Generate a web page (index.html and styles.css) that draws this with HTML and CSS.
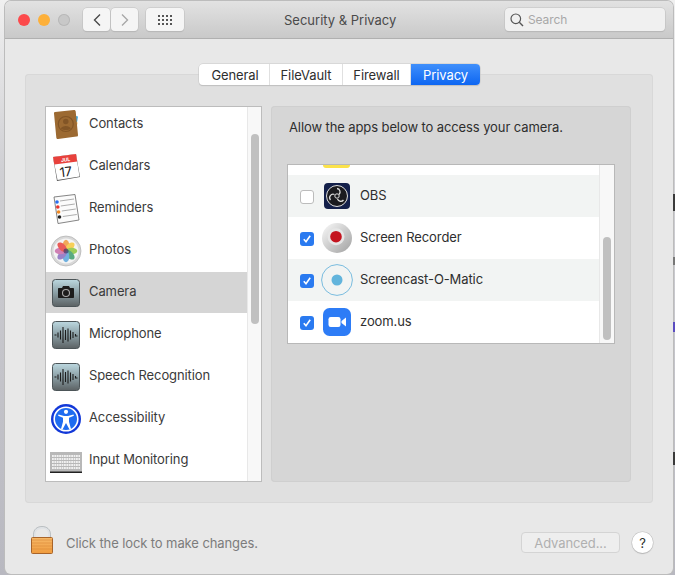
FILE: index.html
```html
<!DOCTYPE html>
<html lang="en">
<head>
    <meta charset="UTF-8">
    <meta name="viewport" content="width=device-width, initial-scale=1.0">
    <title>Security &amp; Privacy</title>
    <link rel="stylesheet" href="styles.css">
</head>
<body>
    <div class="edge-mark mark-one"></div>
    <div class="edge-mark mark-two"></div>
    <div class="edge-mark mark-three"></div>
    <div class="edge-mark mark-four"></div>
    <div class="window">
        <div class="titlebar">
            <div class="lights">
                <span class="light red"></span>
                <span class="light yellow"></span>
                <span class="light gray"></span>
            </div>
            <div class="nav-group">
                <span class="tool-btn nav-btn">
                    <svg width="10" height="14" viewBox="0 0 10 14"><path d="M8 1.500 2.500 7 8 12.500" fill="none" stroke="#4a4a4a" stroke-width="1.400"/></svg>
                </span>
                <span class="tool-btn nav-btn">
                    <svg width="10" height="14" viewBox="0 0 10 14"><path d="M2 1.500 7.500 7 2 12.500" fill="none" stroke="#a8a8a8" stroke-width="1.400"/></svg>
                </span>
            </div>
            <span class="tool-btn grid-btn">
                <svg width="14" height="10" viewBox="0 0 14 10" fill="#555">
                    <rect x="0" y="0" width="2" height="2"/><rect x="4" y="0" width="2" height="2"/><rect x="8" y="0" width="2" height="2"/><rect x="12" y="0" width="2" height="2"/>
                    <rect x="0" y="4" width="2" height="2"/><rect x="4" y="4" width="2" height="2"/><rect x="8" y="4" width="2" height="2"/><rect x="12" y="4" width="2" height="2"/>
                    <rect x="0" y="8" width="2" height="2"/><rect x="4" y="8" width="2" height="2"/><rect x="8" y="8" width="2" height="2"/><rect x="12" y="8" width="2" height="2"/>
                </svg>
            </span>
            <h1 class="title">Security &amp; Privacy</h1>
            <div class="search">
                <svg width="14" height="14" viewBox="0 0 14 14"><circle cx="5.800" cy="5.800" r="4.800" fill="none" stroke="#555" stroke-width="1.200"/><path d="M9.300 9.300 13 13" stroke="#555" stroke-width="1.400"/></svg>
                <span>Search</span>
            </div>
        </div>

        <div class="content">
            <div class="tabs">
                <span class="tab tab-general">General</span>
                <span class="tab tab-filevault">FileVault</span>
                <span class="tab tab-firewall">Firewall</span>
                <span class="tab tab-active">Privacy</span>
            </div>

            <div class="panel">
                <div class="sidebar">
                    <ul class="service-list">
                        <li class="service">
                            <svg class="service-icon" viewBox="0 0 32 32">
                                <path d="M26 7l2 .5-1 6-2-.5z" fill="#3fa9e0"/><path d="M25 13l2.500.5-1 6-2-.5z" fill="#f2a93b"/>
                                <path d="M5 3 24 1c1 0 1.500.5 1.700 1.500L28 26c0 1-.5 1.500-1.500 1.600L8 30c-1 0-1.500-.5-1.700-1.500L4 4.500C4 3.700 4.300 3 5 3z" fill="#9c6a32"/>
                                <circle cx="15.800" cy="15" r="7.500" fill="none" stroke="#825526" stroke-width="1.200"/>
                                <circle cx="15.800" cy="12.500" r="2.700" fill="#825526"/><path d="M10.800 19.500c1-3.500 9-3.500 10 0-2.500 2-7.500 2-10 0z" fill="#825526"/>
                            </svg>
                            <span class="service-name">Contacts</span>
                        </li>
                        <li class="service">
                            <svg class="service-icon" viewBox="0 0 32 32">
                                <path d="M3 6 26 3l4 23-23 4z" fill="#555"/>
                                <path d="M3 6 26 3l3.500 22.500-22 3.500z" fill="#fff"/>
                                <path d="M3 6 26 3l1.200 7.500L4.300 13.500z" fill="#e8413c"/>
                                <text x="11" y="10.500" class="cal-month" transform="rotate(-7 15 9)">JUL</text>
                                <text x="9.500" y="25.500" class="cal-day" transform="rotate(-7 15 20)">17</text>
                            </svg>
                            <span class="service-name">Calendars</span>
                        </li>
                        <li class="service">
                            <svg class="service-icon" viewBox="0 0 32 32">
                                <path d="M4 4 25 1.500 29 27 8 30.500z" fill="#fbfbfb" stroke="#666" stroke-width=".8"/>
                                <path d="M10 8 24 6M10.800 13 24.800 11M11.800 18 25.800 16M12.800 23.500 26.800 21.500" stroke="#999" stroke-width=".8"/>
                                <circle cx="7" cy="9" r="1.800" fill="#2a6ff0"/><circle cx="7.800" cy="14" r="1.800" fill="#e8342c"/>
                                <circle cx="8.600" cy="19" r="1.800" fill="#f08a24"/><circle cx="9.500" cy="24" r="1.800" fill="#222"/>
                            </svg>
                            <span class="service-name">Reminders</span>
                        </li>
                        <li class="service">
                            <svg class="service-icon" viewBox="0 0 32 32">
                                <circle cx="16" cy="16" r="15" fill="#d8d8d8" stroke="#a8a8a8" stroke-width=".6"/>
                                <circle cx="16" cy="16" r="12.500" fill="#f4f4f4"/>
                                <g opacity=".85">
                                    <ellipse cx="16" cy="10.500" rx="3.300" ry="5.800" fill="#f09a3e"/>
                                    <ellipse cx="16" cy="10.500" rx="3.300" ry="5.800" fill="#f7c83e" transform="rotate(45 16 16)"/>
                                    <ellipse cx="16" cy="10.500" rx="3.300" ry="5.800" fill="#8cc63f" transform="rotate(90 16 16)"/>
                                    <ellipse cx="16" cy="10.500" rx="3.300" ry="5.800" fill="#3f9e6e" transform="rotate(135 16 16)"/>
                                    <ellipse cx="16" cy="10.500" rx="3.300" ry="5.800" fill="#5aa5dc" transform="rotate(180 16 16)"/>
                                    <ellipse cx="16" cy="10.500" rx="3.300" ry="5.800" fill="#8a6fc0" transform="rotate(225 16 16)"/>
                                    <ellipse cx="16" cy="10.500" rx="3.300" ry="5.800" fill="#c86aa8" transform="rotate(270 16 16)"/>
                                    <ellipse cx="16" cy="10.500" rx="3.300" ry="5.800" fill="#e8413c" transform="rotate(315 16 16)"/>
                                </g>
                                <circle cx="16" cy="16" r="2.500" fill="#3c3a6a" opacity=".7"/>
                            </svg>
                            <span class="service-name">Photos</span>
                        </li>
                        <li class="service service-selected">
                            <svg class="service-icon" viewBox="0 0 32 32">
                                <defs>
                                    <linearGradient id="tile" x1="0" y1="0" x2="0" y2="1">
                                        <stop offset="0" stop-color="#bcd8e0"/><stop offset=".5" stop-color="#8a9ea4"/><stop offset="1" stop-color="#5c6264"/>
                                    </linearGradient>
                                </defs>
                                <rect x="2.500" y="2.500" width="27" height="27" rx="3" fill="url(#tile)" stroke="#4c5558"/>
                                <path d="M9 11h3l1-2h6l1 2h3c.6 0 1 .4 1 1v8c0 .6-.4 1-1 1H9c-.6 0-1-.4-1-1v-8c0-.6.4-1 1-1z" fill="#1c1c1c"/>
                                <circle cx="16" cy="16" r="3.500" fill="none" stroke="#aaa" stroke-width="1.100"/>
                            </svg>
                            <span class="service-name">Camera</span>
                        </li>
                        <li class="service">
                            <svg class="service-icon" viewBox="0 0 32 32">
                                <rect x="2.500" y="2.500" width="27" height="27" rx="3" fill="url(#tile)" stroke="#4c5558"/>
                                <path d="M4.500 16h2M8 13.500v5M10.500 11.500v9M13 8v16M15.500 11v10M18 9.500v13M20.500 11.500v9M23 13v6M25.500 15v2h2" fill="none" stroke="#1c1c1c" stroke-width="1.100"/>
                            </svg>
                            <span class="service-name">Microphone</span>
                        </li>
                        <li class="service">
                            <svg class="service-icon" viewBox="0 0 32 32">
                                <rect x="2.500" y="2.500" width="27" height="27" rx="3" fill="url(#tile)" stroke="#4c5558"/>
                                <path d="M4.500 16h2M8 13.500v5M10.500 11.500v9M13 8v16M15.500 11v10M18 9.500v13M20.500 11.500v9M23 13v6M25.500 15v2h2" fill="none" stroke="#1c1c1c" stroke-width="1.100"/>
                            </svg>
                            <span class="service-name">Speech Recognition</span>
                        </li>
                        <li class="service">
                            <svg class="service-icon" viewBox="0 0 32 32">
                                <circle cx="16" cy="16" r="15" fill="#1238d8"/>
                                <circle cx="16" cy="16" r="11.800" fill="#1f6cf0" stroke="#fff" stroke-width="1.600"/>
                                <circle cx="16" cy="8.800" r="2.100" fill="#fff"/>
                                <path d="M8.500 11.500 14 13l4 0 5.500-1.500.4 1.300-4.900 2v4l2 7.200-1.500.5L16 20l-3.500 6.500-1.500-.5 2-7.200v-4l-4.900-2z" fill="#fff"/>
                            </svg>
                            <span class="service-name">Accessibility</span>
                        </li>
                        <li class="service">
                            <svg class="service-icon service-icon-wide" viewBox="0 0 32 21">
                                <rect x="0" y="0" width="32" height="20" fill="#b8b8b8"/>
                                <rect x="0" y="19.500" width="32" height="1.500" fill="#222"/>
                                <path d="M2 4h28M2 7h28M2 10h28M2 13h28M2 16h28" stroke="#f0f0f0" stroke-width="2" stroke-dasharray="1.800 .6"/>
                            </svg>
                            <span class="service-name">Input Monitoring</span>
                        </li>
                    </ul>
                    <div class="gutter"><div class="thumb sidebar-thumb"></div></div>
                </div>

                <div class="detail">
                    <p class="detail-text">Allow the apps below to access your camera.</p>
                    <div class="app-box">
                        <div class="app-list">
                            <div class="app-clip"><span class="clipped-icon"></span></div>
                            <div class="app app-odd">
                                <span class="check"></span>
                                <svg class="app-icon" viewBox="0 0 28 28">
                                    <rect width="26" height="26" x="1" y="1" rx="4" fill="#14204a"/>
                                    <circle cx="14" cy="14" r="10.500" fill="#1b1b1f" stroke="#ddd" stroke-width="1"/>
                                    <circle cx="14" cy="14" r="2.200" fill="none" stroke="#ddd"/>
                                    <path d="M14 6.500a3.500 3.500 0 0 1 2 6M20.500 18a3.500 3.500 0 0 1-6-1M7.500 18a3.500 3.500 0 0 1 4-5.500" fill="none" stroke="#ddd" stroke-width="1.300"/>
                                </svg>
                                <span class="app-name">OBS</span>
                            </div>
                            <div class="app">
                                <span class="check check-on"><svg width="10" height="10" viewBox="0 0 10 10"><path d="M1.800 5.200 4 7.800 8.200 1.800" fill="none" stroke="#fff" stroke-width="1.600"/></svg></span>
                                <svg class="app-icon app-icon-large" viewBox="0 0 32 32">
                                    <defs>
                                        <linearGradient id="disc" x1="0" y1="0" x2="1" y2="1">
                                            <stop offset="0" stop-color="#fafafa"/><stop offset="1" stop-color="#a0a0a0"/>
                                        </linearGradient>
                                    </defs>
                                    <circle cx="16" cy="16" r="15" fill="url(#disc)"/>
                                    <circle cx="15" cy="14.700" r="8.500" fill="#e6e6e6"/>
                                    <circle cx="15" cy="14.700" r="5.800" fill="#c4141f"/>
                                </svg>
                                <span class="app-name">Screen Recorder</span>
                            </div>
                            <div class="app app-odd">
                                <span class="check check-on"><svg width="10" height="10" viewBox="0 0 10 10"><path d="M1.800 5.200 4 7.800 8.200 1.800" fill="none" stroke="#fff" stroke-width="1.600"/></svg></span>
                                <svg class="app-icon app-icon-large" viewBox="0 0 32 32">
                                    <circle cx="16" cy="16" r="15.400" fill="none" stroke="#6cb6dc" stroke-width=".9"/>
                                    <circle cx="16" cy="16" r="5.500" fill="#62b4dc"/>
                                </svg>
                                <span class="app-name">Screencast-O-Matic</span>
                            </div>
                            <div class="app">
                                <span class="check check-on"><svg width="10" height="10" viewBox="0 0 10 10"><path d="M1.800 5.200 4 7.800 8.200 1.800" fill="none" stroke="#fff" stroke-width="1.600"/></svg></span>
                                <svg class="app-icon" viewBox="0 0 28 28">
                                    <rect x="0" y="0" width="28" height="28" rx="6.500" fill="#2d7cf6"/>
                                    <rect x="5.500" y="9" width="12" height="10" rx="2.200" fill="#fff"/>
                                    <path d="M18.500 13 23 9.500v9L18.500 15z" fill="#fff"/>
                                </svg>
                                <span class="app-name">zoom.us</span>
                            </div>
                        </div>
                        <div class="gutter app-gutter"><div class="thumb app-thumb"></div></div>
                    </div>
                </div>
            </div>
        </div>

        <div class="footer">
            <svg class="lock" width="24" height="30" viewBox="0 0 24 30">
                <defs>
                    <linearGradient id="brass" x1="0" y1="0" x2="0" y2="1">
                        <stop offset="0" stop-color="#f6b868"/><stop offset="1" stop-color="#f09c3e"/>
                    </linearGradient>
                </defs>
                <path d="M4.500 13V9.500C4.500 5 7.500 2.500 12 2.500s7.500 2.500 7.500 7V13" fill="none" stroke="#dfe2e5" stroke-width="2.400"/>
                <path d="M3.500 13V9.500C3.500 4.500 7 1.500 12 1.500s8.500 3 8.500 8V13" fill="none" stroke="#9ea4a8" stroke-width=".6"/>
                <rect x="1.500" y="12.500" width="21" height="16" rx="1" fill="url(#brass)" stroke="#a8642a"/>
                <path d="M2 15h20M2 18h20M2 21h20M2 24h20" stroke="#dc8e3e" stroke-width=".7"/>
            </svg>
            <span class="lock-text">Click the lock to make changes.</span>
            <span class="advanced">Advanced...</span>
            <span class="help">?</span>
        </div>
    </div>
</body>
</html>
```

FILE: styles.css
```css
* {
    box-sizing: border-box;
}
body {
    margin: 0;
    height: 575px;
    padding-top: 1px;
    overflow: hidden;
    background: linear-gradient(#f0f0f0, #cfcfd3 30%, #b8b8c0);
    font-family: "Inter", "Liberation Sans", sans-serif;
    font-size: 13px;
    letter-spacing: -0.1px;
    color: #3a3a3a;
}
.window {
    width: 668px;
    height: 573px;
    margin-left: 5px;
    background: #e8e8e8;
    border-radius: 6px;
    box-shadow: 0 0 0 1px #bcbcbc;
    overflow: hidden;
    display: flex;
    flex-direction: column;
}
/* bits of whatever window sits behind this one */
.edge-mark {
    position: absolute;
    left: 673px;
    width: 2px;
    background: #3a3a3a;
}
.mark-one { top: 194px; height: 17px; }
.mark-two { top: 257px; height: 8px; background: #777; }
.mark-three { top: 322px; height: 10px; background: #5a4cc0; }
.mark-four { top: 452px; height: 13px; }

/* title bar */
.titlebar {
    height: 38px;
    flex: none;
    display: flex;
    align-items: center;
    padding: 0 8px 0 13px;
    background: linear-gradient(#e2e2e2, #c9c9c9);
    border-bottom: 1px solid #b0b0b0;
}
.lights {
    display: flex;
    gap: 8px;
}
.light {
    width: 12px;
    height: 12px;
    border-radius: 50%;
}
.red { background: #fc4a4c; }
.yellow { background: #fdb03a; }
.gray { background: #c8c8c8; box-shadow: inset 0 0 0 1px #b8b8b8; }
.tool-btn {
    height: 23px;
    display: flex;
    align-items: center;
    justify-content: center;
    background: #f5f5f5;
    border-radius: 4px;
    box-shadow: 0 0 0 .5px #c0c0c0, 0 1px 1px #b0b0b0;
}
.nav-group {
    display: flex;
    gap: 1px;
    margin-left: 13px;
}
.nav-btn {
    width: 27px;
}
.grid-btn {
    width: 38px;
    margin-left: 8px;
}
.title {
    margin: 0 0 0 100px;
    font-size: 13px;
    font-weight: 400;
    letter-spacing: 0;
    color: #4a4a4a;
    white-space: nowrap;
}
.search {
    width: 160px;
    height: 23px;
    margin-left: auto;
    display: flex;
    align-items: center;
    gap: 4px;
    padding-left: 5px;
    background: #f0f0f0;
    border-radius: 4px;
    box-shadow: 0 0 0 .5px #c0c0c0, 0 1px 1px #b0b0b0;
    font-size: 12px;
    color: #a8a8a8;
}

/* tabs and panel */
.content {
    flex: 1;
    position: relative;
    padding: 35px 20px 0;
}
.tabs {
    position: absolute;
    top: 25px;
    left: 194px;
    width: 281px;
    height: 21px;
    display: flex;
    background: #fff;
    border-radius: 4px;
    box-shadow: 0 0 0 .5px #c8c8c8, 0 1px 1px #b8b8b8;
}
.tab {
    display: flex;
    align-items: center;
    justify-content: center;
    border-right: 1px solid #e0e0e0;
    color: #2e2e2e;
}
.tab-general { width: 71px; padding-left: 2px; }
.tab-filevault { width: 73px; }
.tab-firewall { width: 68px; }
.tab-active {
    flex: 1;
    border: 0;
    border-radius: 0 4px 4px 0;
    background: linear-gradient(#3f8ffb, #0d66f2);
    color: #fff;
}
.panel {
    width: 628px;
    height: 429px;
    display: flex;
    gap: 9px;
    padding: 32px 22px 21px 20px;
    background: #e0e0e0;
    border-radius: 4px;
    box-shadow: inset 0 0 0 1px #d8d8d8;
}

/* left list */
.sidebar {
    width: 217px;
    flex: none;
    display: flex;
    background: #fff;
    border: 1px solid #bcbcbc;
    overflow: hidden;
}
.service-list {
    flex: 1;
    margin: -3px 0 0;
    padding: 0;
    list-style: none;
}
.service {
    height: 42px;
    display: flex;
    align-items: center;
    gap: 7px;
    padding-left: 4px;
}
.service-name {
    margin-bottom: 4px;
}
.service-selected {
    background: linear-gradient(#d5d5d5 41px, #fff 41px);
}
.service-icon {
    width: 32px;
    height: 32px;
    flex: none;
}
.service-icon-wide {
    height: 21px;
    margin-top: 2px;
}
.cal-month {
    font-size: 5px;
    font-weight: 700;
    fill: #fff;
}
.cal-day {
    font-size: 13px;
    fill: #222;
}
.gutter {
    width: 14px;
    flex: none;
    padding-left: 3px;
    background: #f8f8f8;
    border-left: 1px solid #e8e8e8;
}
.thumb {
    width: 8px;
    background: #c0c0c0;
    border-radius: 4px;
}
.sidebar-thumb {
    height: 190px;
    margin-top: 27px;
}

/* right pane */
.detail {
    flex: 1;
    padding: 13px 16px 0;
    background: #d6d6d6;
    border-radius: 4px;
    box-shadow: inset 0 0 0 1px #cfcfcf;
}
.detail-text {
    margin: 0 0 29px 2px;
    line-height: 16px;
    color: #2e2e2e;
}
.app-box {
    width: 328px;
    height: 180px;
    display: flex;
    background: #fff;
    border: 1px solid #b8b8b8;
}
.app-list {
    flex: 1;
}
.app-clip {
    height: 10px;
    padding-left: 35px;
}
.clipped-icon {
    display: block;
    width: 27px;
    height: 3px;
    background: #fbe24a;
    border-radius: 0 0 3px 3px;
}
.app {
    height: 42px;
    display: flex;
    align-items: center;
    padding-left: 12px;
    color: #2e2e2e;
}
.app-name {
    margin-bottom: 2px;
}
.app-odd {
    background: #f2f4f3;
}
.check {
    width: 14px;
    height: 14px;
    flex: none;
    margin-top: 2px;
    display: flex;
    align-items: center;
    justify-content: center;
    background: #fff;
    border: 1px solid #bcbcbc;
    border-radius: 3px;
}
.check-on {
    background: #2a7af0;
    border: 0;
}
.app-icon {
    width: 28px;
    height: 28px;
    flex: none;
    margin: 0 9px 0 9px;
}
.app-icon-large {
    width: 32px;
    height: 32px;
    margin: 0 7px;
}
.app-gutter {
    width: 15px;
}
.app-thumb {
    height: 103px;
    margin-top: 72px;
}

/* bottom row */
.footer {
    height: 71px;
    flex: none;
    display: flex;
    align-items: center;
    padding: 8px 20px 0 25px;
}
.lock {
    margin-bottom: 6px;
}
.lock-text {
    margin-left: 12px;
    color: #7c7c7c;
}
.advanced {
    width: 99px;
    height: 21px;
    margin-left: auto;
    display: flex;
    align-items: center;
    justify-content: center;
    background: #eeeeee;
    border: 1px solid #d4d4d4;
    border-radius: 4px;
    color: #b0b0b0;
}
.help {
    width: 21px;
    height: 21px;
    margin-left: 12px;
    display: flex;
    align-items: center;
    justify-content: center;
    background: #fff;
    border-radius: 50%;
    box-shadow: 0 0 0 .5px #c0c0c0, 0 1px 1px #b0b0b0;
    color: #2e2e2e;
}
```
